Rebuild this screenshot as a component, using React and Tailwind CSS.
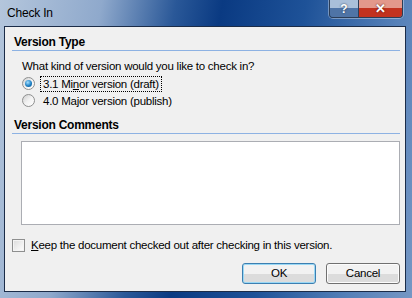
import React from "react";

const font = { fontFamily: '"Liberation Sans", Arial, sans-serif' };

const Radio = ({ checked }) => (
  <span className="flex h-[13px] w-[13px] items-center justify-center rounded-full border border-[#8e8f8f] bg-gradient-to-br from-[#cfcfcf] via-[#f2f2f2] to-white">
    {checked && (
      <span className="h-[7px] w-[7px] rounded-full bg-[radial-gradient(circle_at_40%_35%,#a5e0ff,#1c7fc4_55%,#0b4d80)]" />
    )}
  </span>
);

const Heading = ({ children }) => (
  <div className="h-[16px] border-b border-[#8db2e3] pl-[2px] text-[12px] font-bold leading-[15px] text-black">
    {children}
  </div>
);

const Button = ({ children, focused }) => (
  <button
    type="button"
    className={
      "flex h-[21px] w-[74px] items-center justify-center rounded-[3px] border text-[11.5px] text-black bg-gradient-to-b from-[#f2f2f2] from-50% to-[#dcdcdc] to-50% " +
      (focused ? "border-[#3c7fb1] shadow-[inset_0_0_0_1px_#9ad8f5]" : "border-[#707070] shadow-[inset_0_0_0_1px_#fcfcfc]")
    }
  >
    {children}
  </button>
);

export default function App() {
  return (
    <div
      className="flex h-[298px] w-[412px] flex-col bg-[linear-gradient(100deg,#b4c6dc_0%,#8fa9cc_22%,#2a5898_38%,#0a3a82_48%,#1e5298_66%,#5580b8_86%,#7597c4_100%)]"
      style={font}
    >
      <div className="flex h-[26px] items-start justify-between pl-[7px] pr-[9px]">
        <span className="mt-[6px] text-[12px] leading-[15px] tracking-[-0.2px] text-black">Check In</span>
        <div className="flex h-[18px] overflow-hidden rounded-b-[4px] border border-t-0 border-[#2b3d57] shadow-[0_0_0_1px_rgba(255,255,255,0.35)]">
          <div className="flex w-[29px] items-center justify-center border-r border-[#2b3d57] bg-gradient-to-b from-[#a9bfd9] from-45% to-[#4f74a6] to-45% text-[12px] font-bold leading-none text-white [text-shadow:0_0_2px_#1b2f4a]">
            ?
          </div>
          <div className="flex w-[43px] items-center justify-center bg-gradient-to-b from-[#e3988b] from-45% to-[#c2321f] to-45% text-[13px] font-bold leading-none text-white [text-shadow:0_0_2px_#4a0c04]">
            ✕
          </div>
        </div>
      </div>
      <div className="ml-[4px] mr-[6px] flex h-[266px] flex-col border border-[#1b2c48] bg-[#f0f0f0] pl-[7px] pr-[5px] pt-[8px] text-[11.5px] tracking-[-0.25px]">
        <Heading>Version Type</Heading>
        <div className="mt-[8px] h-[15px] pl-[10px] leading-[15px] text-black">
          What kind of version would you like to check in?
        </div>
        <div className="mt-[1px] flex h-[17px] items-center gap-[5px] pl-[10px]">
          <Radio checked />
          <span className="border border-dotted border-black px-[2px] leading-[14px] text-black">
            3.1 Mi<u>n</u>or version (draft)
          </span>
        </div>
        <div className="mt-[0px] flex h-[17px] items-center gap-[5px] pl-[10px]">
          <Radio />
          <span className="px-[3px] leading-[14px] text-black">
            4.0 Ma<u>j</u>or version (publish)
          </span>
        </div>
        <div className="mt-[9px]">
          <Heading>Version Comments</Heading>
        </div>
        <div className="ml-[9px] mt-[7px] h-[84px] border border-[#abadb3] bg-white" />
        <div className="mt-[13px] flex h-[15px] items-center gap-[6px]">
          <span className="h-[13px] w-[13px] border border-[#8e8f8f] bg-gradient-to-br from-[#dcdcdc] to-white shadow-[inset_0_0_0_1px_#f4f4f4]" />
          <span className="leading-[15px] text-black">
            <u>K</u>eep the document checked out after checking in this version.
          </span>
        </div>
        <div className="mt-[10px] flex justify-end gap-[10px]">
          <Button focused>OK</Button>
          <Button>Cancel</Button>
        </div>
      </div>
    </div>
  );
}
